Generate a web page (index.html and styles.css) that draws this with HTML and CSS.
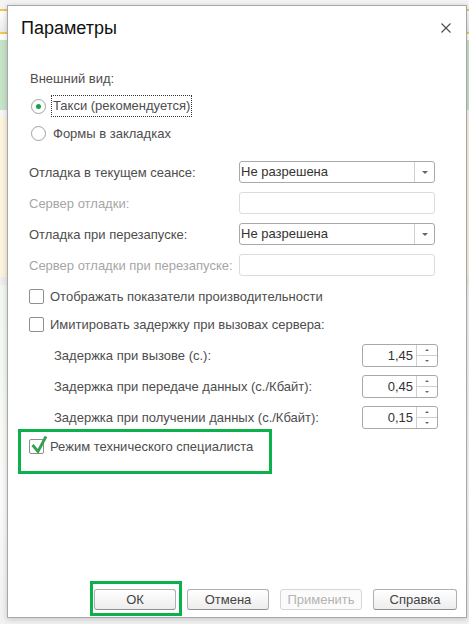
FILE: index.html
```html
<!DOCTYPE html>
<html lang="ru">
<head>
  <meta charset="UTF-8" />
  <title>Параметры</title>
  <link rel="stylesheet" href="styles.css">
</head>
<body>

  <div class="dialog">

    <!-- Header -->
    <div class="dialog-head">
      <h1>Параметры</h1>
      <svg class="close" width="10" height="10" viewBox="0 0 10 10">
        <path d="M0.5 0.5 L9.5 9.5 M9.5 0.5 L0.5 9.5" stroke="#4a4a4a" stroke-width="1.1" fill="none" />
      </svg>
    </div>

    <div class="dialog-body">

      <!-- Appearance -->
      <div class="row caption">Внешний вид:</div>
      <div class="row radio-row first">
        <span class="radio checked"></span>
        <span class="focus">Такси (рекомендуется)</span>
      </div>
      <div class="row radio-row second">
        <span class="radio"></span>
        <span>Формы в закладках</span>
      </div>

      <!-- Debug -->
      <div class="debug-grid">
        <span class="label">Отладка в текущем сеансе:</span>
        <div class="select"><span class="select-text">Не разрешена</span><span class="select-btn"><i></i></span></div>

        <span class="label disabled">Сервер отладки:</span>
        <div class="field"></div>

        <span class="label">Отладка при перезапуске:</span>
        <div class="select"><span class="select-text">Не разрешена</span><span class="select-btn"><i></i></span></div>

        <span class="label disabled">Сервер отладки при перезапуске:</span>
        <div class="field"></div>
      </div>

      <div class="row check-row perf">
        <span class="check"></span>
        <span>Отображать показатели производительности</span>
      </div>
      <div class="row check-row lag">
        <span class="check"></span>
        <span>Имитировать задержку при вызовах сервера:</span>
      </div>

      <!-- Delays -->
      <div class="delays">
        <div class="delay-row">
          <span>Задержка при вызове (с.):</span>
          <div class="spin"><span class="spin-value">1,45</span><span class="spin-btns"><i class="up"></i><i class="down"></i></span></div>
        </div>
        <div class="delay-row">
          <span>Задержка при передаче данных (с./Кбайт):</span>
          <div class="spin"><span class="spin-value">0,45</span><span class="spin-btns"><i class="up"></i><i class="down"></i></span></div>
        </div>
        <div class="delay-row">
          <span>Задержка при получении данных (с./Кбайт):</span>
          <div class="spin"><span class="spin-value">0,15</span><span class="spin-btns"><i class="up"></i><i class="down"></i></span></div>
        </div>
      </div>

      <div class="row check-row tech">
        <span class="check">
          <svg class="tick" width="18" height="19" viewBox="0 0 18 19">
            <path d="M2.5 10 L8 16.5 L16 1.5" stroke="#33a14d" stroke-width="2.8" fill="none" />
          </svg>
        </span>
        <span>Режим технического специалиста</span>
        <span class="marker tech-marker"></span>
      </div>

    </div>

    <!-- Buttons -->
    <div class="dialog-foot">
      <button class="btn ok">ОК<span class="marker ok-marker"></span></button>
      <button class="btn">Отмена</button>
      <button class="btn" disabled>Применить</button>
      <button class="btn wide">Справка</button>
    </div>

  </div>

</body>
</html>
```

FILE: styles.css
```css
html, body {
  height: 100%;
}

body {
  margin: 0;
  overflow: hidden;
  font-family: "Liberation Sans", Arial, sans-serif;
  font-size: 13px;
  color: #4d4d4d;
  background: linear-gradient(to bottom,
    #f4f4f4 0, #f4f4f4 9px,
    #f2c94c 9px, #f2c94c 11px,
    #ffffff 11px, #ececec 32px,
    #f2c94c 32px, #f2c94c 34px,
    #ffffff 34px, #ffffff 40px,
    #c6e4c7 40px, #c6e4c7 110px,
    #f6f6f6 110px, #f6f6f6 117px,
    #fcf4df 117px, #fcf4df 277px,
    #eeeeee 277px, #eeeeee 285px,
    #f2f7ef 285px, #fafcf9 500px, #f1f1f1 624px);
}

/* Dialog window */
.dialog {
  box-sizing: border-box;
  width: 460px;
  height: 613px;
  margin: 5px 0 0 7px;
  background: white;
  border: 1px solid #a8a8a8;
  box-shadow: 0 1px 6px rgba(0, 0, 0, 0.2);
  display: flex;
  flex-direction: column;
}

.dialog-head {
  height: 44px;
  display: flex;
  align-items: center;
  justify-content: space-between;
  padding: 0 15px 0 13px;
}

.dialog-head h1 {
  margin: 0;
  font-size: 18px;
  font-weight: normal;
  color: #111;
}

.close {
  display: block;
  margin-top: -1px;
}

.dialog-body {
  flex: 1;
  padding: 17px 0 0 21px;
}

.row {
  height: 22px;
  display: flex;
  align-items: center;
}

.caption {
  padding-left: 1px;
}

/* Radio buttons */
.radio-row.first {
  margin-top: 6px;
}

.radio-row.second {
  margin-top: 5px;
}

.radio {
  box-sizing: border-box;
  width: 15px;
  height: 15px;
  margin: 0 7px 0 2px;
  border: 1px solid #a0a0a0;
  border-radius: 50%;
  background: white;
  display: flex;
  align-items: center;
  justify-content: center;
}

.radio.checked::after {
  content: "";
  width: 5px;
  height: 5px;
  border-radius: 50%;
  background: #15a04b;
}

.focus {
  outline: 1px dotted #333;
  outline-offset: 0;
  padding: 2px 1px 3px 1px;
  margin-left: -1px;
}

/* Debug settings */
.debug-grid {
  margin-top: 17px;
  display: grid;
  grid-template-columns: 210px 196px;
  grid-auto-rows: 22px;
  row-gap: 9px;
  align-items: center;
}

.label.disabled {
  color: #a6a6a6;
}

.select,
.field,
.spin {
  box-sizing: border-box;
  height: 22px;
  border-radius: 3px;
  background: white;
  display: flex;
}

.select {
  border: 1px solid #a9a9a9;
}

.select-text {
  flex: 1;
  padding-left: 1px;
  line-height: 20px;
  color: #333;
}

.select-btn {
  width: 19px;
  border-left: 1px solid #cfcfcf;
  display: flex;
  align-items: center;
  justify-content: center;
}

.select-btn i {
  width: 0;
  height: 0;
  border-left: 3px solid transparent;
  border-right: 3px solid transparent;
  border-top: 3px solid #666;
  margin-left: 1px;
}

.field {
  border: 1px solid #dcdcdc;
}

/* Checkboxes */
.check {
  position: relative;
  box-sizing: border-box;
  width: 15px;
  height: 15px;
  margin-right: 6px;
  border: 1px solid #8f8f8f;
  border-radius: 2px;
  background: white;
}

.check-row.perf {
  margin-top: 9px;
}

.check-row.lag {
  margin-top: 6px;
}

.tick {
  position: absolute;
  left: 0;
  top: -5px;
  overflow: visible;
}

/* Delay spinners */
.delays {
  margin-top: 9px;
  width: 409px;
  padding-left: 25px;
  box-sizing: border-box;
  display: flex;
  flex-direction: column;
  gap: 8px;
}

.delay-row {
  height: 23px;
  display: flex;
  align-items: center;
  justify-content: space-between;
}

.spin {
  width: 76px;
  height: 23px;
  border: 1px solid #a9a9a9;
}

.spin-value {
  flex: 1;
  text-align: right;
  padding-right: 3px;
  line-height: 21px;
  color: #333;
}

.spin-btns {
  width: 20px;
  border-left: 1px solid #cfcfcf;
  display: flex;
  flex-direction: column;
}

.spin-btns i {
  flex: 1;
  display: flex;
  align-items: center;
  justify-content: center;
}

.spin-btns i.up {
  border-bottom: 1px solid #cfcfcf;
}

.spin-btns i::after {
  content: "";
  width: 0;
  height: 0;
  border-left: 2px solid transparent;
  border-right: 2px solid transparent;
}

.spin-btns i.up::after {
  border-bottom: 2px solid #666;
}

.spin-btns i.down::after {
  border-top: 2px solid #666;
}

.check-row.tech {
  position: relative;
  margin-top: 6px;
}

/* Green highlight frames */
.marker {
  position: absolute;
  border: 3px solid #0cb14c;
  pointer-events: none;
}

.tech-marker {
  left: -11px;
  top: -6px;
  width: 248px;
  height: 39px;
}

/* Footer buttons */
.dialog-foot {
  display: flex;
  justify-content: flex-end;
  gap: 11px;
  padding: 0 9px 7px 0;
}

.btn {
  position: relative;
  box-sizing: border-box;
  width: 82px;
  height: 21px;
  padding: 0;
  font-family: "Liberation Sans", Arial, sans-serif;
  font-size: 13px;
  font-weight: normal;
  color: #444;
  background: linear-gradient(#ffffff, #ededed);
  border: 1px solid #b0b0b0;
  border-bottom-color: #8f8f8f;
  border-radius: 3px;
}

.btn.wide {
  width: 84px;
}

.btn:disabled {
  color: #b3b3b3;
  background: #fbfbfb;
  border-color: #d6d6d6;
}

.ok-marker {
  left: -5px;
  right: -7px;
  top: -9px;
  bottom: -7px;
}
```
